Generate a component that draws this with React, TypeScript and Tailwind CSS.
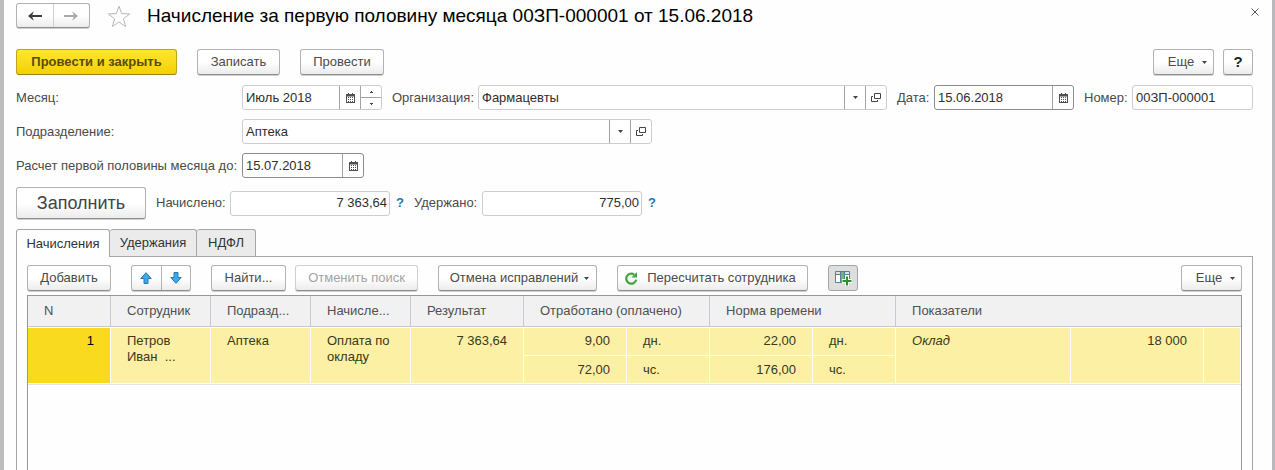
import { useId, useState, type ReactNode } from 'react'
import clsx from 'clsx'

const CALENDAR = 'calendar'
const LIST = 'list'
const OPEN = 'open'

type FieldAction = typeof CALENDAR | typeof LIST | typeof OPEN

const ACTION_LABELS: Record<FieldAction, string> = {
  calendar: 'Календарь',
  list: 'Выбрать из списка',
  open: 'Открыть',
}

function Caret() {
  return (
    <svg width="5" height="3" viewBox="0 0 5 3" className="shrink-0" aria-hidden="true">
      <path d="M0 0h5L2.5 3z" fill="#444" />
    </svg>
  )
}

function CalendarIcon() {
  return (
    <svg width="9" height="10" viewBox="0 0 9 10" aria-hidden="true">
      <path d="M2 0h1v1h3V0h1v1h2v9H0V1h2z" fill="#505050" />
      <path d="M1 3.5h7V9H1z" fill="#fff" />
      <path d="M2 4h1v1H2zM4 4h1v1H4zM6 4h1v1H6zM2 6h1v1H2zM4 6h1v1H4zM6 6h1v1H6zM2 8h1v1H2zM4 8h1v1H4zM6 8h1v1H6z" fill="#505050" />
    </svg>
  )
}

function OpenIcon() {
  return (
    <svg width="10" height="9" viewBox="0 0 10 9" fill="none" stroke="#444" aria-hidden="true">
      <path d="M3.5 0.5h6v5h-6z" />
      <path d="M2 3.5H0.5v5h6V7" />
    </svg>
  )
}

function ArrowIcon({ back, color }: { back?: boolean; color: string }) {
  return (
    <svg width="14" height="10" viewBox="0 0 14 10" fill={color} aria-hidden="true">
      {back ? <path d="M0 5l5.5-4.5v0.8L4.2 4H14v2H4.2l1.3 2.7v0.8z" /> : <path d="M14 5L8.5 0.5v0.8L9.8 4H0v2h9.8L8.5 8.7v0.8z" />}
    </svg>
  )
}

function BlueArrow({ down }: { down?: boolean }) {
  return (
    <svg width="12" height="12" viewBox="0 0 12 12" fill="#3fa9e8" stroke="#2479b5" strokeLinejoin="round" aria-hidden="true">
      {down ? <path d="M4 0.5h4v5h3.2L6 11.3 0.8 5.5H4z" /> : <path d="M6 0.7l5.2 5.8H8v5H4v-5H0.8z" />}
    </svg>
  )
}

function StarIcon() {
  return (
    <svg width="24" height="23" viewBox="0 0 24 23" fill="#fff" stroke="#b4b8bb" aria-hidden="true">
      <path d="M12 1.2l2.7 7.4 8 .3-6.3 4.9 2.2 7.7-6.6-4.5-6.6 4.5 2.2-7.7L1.3 8.9l8-.3z" />
    </svg>
  )
}

function RefreshIcon() {
  return (
    <svg width="13" height="13" viewBox="0 0 13 13" aria-hidden="true">
      <path d="M11.2 7.6A5 5 0 1 1 9.2 2.6" fill="none" stroke="#3da63f" strokeWidth="2.2" />
      <path d="M12 0v5.6H6.4z" fill="#3da63f" />
    </svg>
  )
}

function ColumnsIcon() {
  return (
    <svg width="17" height="15" viewBox="0 0 17 15" aria-hidden="true">
      <path d="M0.5 0.5h14v11H0.5z" fill="#fff" />
      <path d="M1 1h13v2H1z" fill="#d3e4f0" />
      <path d="M5 1h5v11H5z" fill="#6cb872" />
      <path d="M0.5 0.5h14v11H0.5zM5.5 1v11M9.5 1v11M1 3.5h4M10 3.5h4" stroke="#557f9e" fill="none" />
      <path d="M12 5v10M7 10h10" stroke="#fff" strokeWidth="4" />
      <path d="M12 5.5v9M7.5 10h9" stroke="#2c9422" strokeWidth="2" />
    </svg>
  )
}

const buttonFrame = 'rounded-[3px] border border-[#b2b2b2] border-b-[#8e8e8e] bg-linear-to-b from-white from-50% to-[#ececec] shadow-[0_1px_0_#d0d0d0]'

function Button({ children, className, disabled }: { children: ReactNode; className?: string; disabled?: boolean }) {
  return (
    <button
      type="button"
      disabled={disabled}
      className={clsx('flex h-[26px] shrink-0 items-center justify-center whitespace-nowrap', buttonFrame, disabled ? 'text-[#a3a3a3]' : 'text-[#4a4a4a]', className)}
    >
      {children}
    </button>
  )
}

function MoreButton() {
  return (
    <Button className="w-[61px] gap-2 pl-2">
      Еще <Caret />
    </Button>
  )
}

type FieldProps = {
  label: string
  value: string
  labelClass?: string
  boxClass?: string
  actions?: FieldAction[]
  strong?: boolean
  numeric?: boolean
  stepper?: boolean
}

function Field({ label, value, labelClass, boxClass, actions = [], strong, numeric, stepper }: FieldProps) {
  const id = useId()
  return (
    <>
      <label htmlFor={id} className={clsx('shrink-0 whitespace-nowrap', labelClass)}>{label}</label>
      <div className={clsx('flex h-[25px] rounded-[3px] border bg-white', strong ? 'border-[#8c8c8c]' : 'border-[#cdcdcd]', boxClass)}>
        <input
          id={id}
          defaultValue={value}
          className={clsx('min-w-0 flex-1 bg-transparent text-[#2e2e2e] outline-none', numeric ? 'px-[2px] text-right' : 'px-[3px]')}
        />
        {actions.map((action) => (
          <button key={action} type="button" aria-label={ACTION_LABELS[action]} className="flex w-[21px] shrink-0 items-center justify-center border-l border-[#a3a3a3]">
            {action === CALENDAR && <CalendarIcon />}
            {action === LIST && <Caret />}
            {action === OPEN && <OpenIcon />}
          </button>
        ))}
        {stepper && (
          <div className="flex w-[21px] shrink-0 flex-col border-l border-[#a3a3a3]">
            <button type="button" aria-label="Больше" className="flex flex-1 items-center justify-center border-b border-[#a3a3a3]">
              <svg width="3" height="2" viewBox="0 0 3 2" aria-hidden="true"><path d="M1 0h1v1h1v1H0V1h1z" fill="#444" /></svg>
            </button>
            <button type="button" aria-label="Меньше" className="flex flex-1 items-center justify-center">
              <svg width="3" height="2" viewBox="0 0 3 2" aria-hidden="true"><path d="M0 0h3v1H2v1H1V1H0z" fill="#444" /></svg>
            </button>
          </div>
        )}
      </div>
    </>
  )
}

const TABS = [
  { title: 'Начисления', width: 'w-[94px]' },
  { title: 'Удержания', width: 'w-[87px]' },
  { title: 'НДФЛ', width: 'w-[59px]' },
]

const HEADERS = [
  { title: 'N', span: 1 },
  { title: 'Сотрудник', span: 1 },
  { title: 'Подразд...', span: 1 },
  { title: 'Начисле...', span: 1 },
  { title: 'Результат', span: 1 },
  { title: 'Отработано (оплачено)', span: 2 },
  { title: 'Норма времени', span: 2 },
  { title: 'Показатели', span: 3 },
]

const cell = 'border-r border-b border-white px-4 pt-[5px] align-top'
const lowerCell = 'border-r border-b border-white px-4 pt-[6px] align-top'

function AccrualsTable() {
  return (
    <table className="w-full table-fixed border-separate border-spacing-0 text-left leading-4">
      <colgroup>
        <col className="w-[83px]" />
        <col className="w-[100px]" />
        <col className="w-[100px]" />
        <col className="w-[100px]" />
        <col className="w-[113px]" />
        <col className="w-[103px]" />
        <col className="w-[83px]" />
        <col className="w-[103px]" />
        <col className="w-[83px]" />
        <col className="w-[175px]" />
        <col className="w-[133px]" />
        <col />
      </colgroup>
      <thead>
        <tr className="h-[31px] bg-[#f1f1f1] text-[#505050]">
          {HEADERS.map((h) => (
            <th key={h.title} colSpan={h.span} className="border-r border-b border-[#c9c9d2] px-4 font-normal whitespace-nowrap last:border-r-0">{h.title}</th>
          ))}
        </tr>
      </thead>
      <tbody className="bg-[#fcf0a5] text-[#3b3820]">
        <tr className="h-[29px]">
          <td rowSpan={2} className={clsx(cell, 'border-t bg-[#fada1e] text-right text-black')}>1</td>
          <td rowSpan={2} className={clsx(cell, 'border-t')}>Петров<br />Иван &nbsp;...</td>
          <td rowSpan={2} className={clsx(cell, 'border-t')}>Аптека</td>
          <td rowSpan={2} className={clsx(cell, 'border-t')}>Оплата по окладу</td>
          <td rowSpan={2} className={clsx(cell, 'border-t text-right')}>7 363,64</td>
          <td className={clsx(cell, 'border-t text-right')}>9,00</td>
          <td className={clsx(cell, 'border-t')}>дн.</td>
          <td className={clsx(cell, 'border-t text-right')}>22,00</td>
          <td className={clsx(cell, 'border-t')}>дн.</td>
          <td rowSpan={2} className={clsx(cell, 'border-t italic')}>Оклад</td>
          <td rowSpan={2} className={clsx(cell, 'border-t text-right')}>18 000</td>
          <td rowSpan={2} className={clsx(cell, 'border-t')} />
        </tr>
        <tr className="h-[28px]">
          <td className={clsx(lowerCell, 'text-right')}>72,00</td>
          <td className={lowerCell}>чс.</td>
          <td className={clsx(lowerCell, 'text-right')}>176,00</td>
          <td className={lowerCell}>чс.</td>
        </tr>
      </tbody>
    </table>
  )
}

export default function App() {
  const [tab, setTab] = useState('Начисления')

  return (
    <main className="flex min-h-screen flex-col border-r-[3px] border-l-4 border-r-[#b9b9bd] border-l-[#bdbdbd] bg-[#fefefe] pt-[3px] font-['Liberation_Sans',Arial,sans-serif] text-[13px] leading-4 text-[#4a4a4a]">
      {/* Title bar */}
      <header className="flex items-start pr-2 pl-3">
        <div className={clsx('flex h-[25px] w-[74px] shrink-0', buttonFrame)}>
          <button type="button" aria-label="Назад" className="flex flex-1 items-center justify-center border-r border-[#d0d0d0]">
            <ArrowIcon back color="#3c3c3c" />
          </button>
          <button type="button" aria-label="Вперед" className="flex flex-1 items-center justify-center">
            <ArrowIcon color="#a9a9a9" />
          </button>
        </div>
        <button type="button" aria-label="Добавить в избранное" className="ml-[17px] pt-[2px]">
          <StarIcon />
        </button>
        <h1 className="ml-4 flex-1 text-[19px] leading-[26px] text-black">Начисление за первую половину месяца 00ЗП-000001 от 15.06.2018</h1>
        <button type="button" aria-label="Закрыть" className="p-[5px]">
          <svg width="8" height="8" viewBox="0 0 8 8" stroke="#555" aria-hidden="true"><path d="M0.5 0.5l7 7M7.5 0.5l-7 7" /></svg>
        </button>
      </header>

      <div className="mt-5 flex flex-1 flex-col pr-[19px] pl-3">
        <div className="flex">
          <button type="button" className="h-[26px] w-[161px] rounded-[3px] border border-[#c0a51c] border-b-[#9c8511] bg-linear-to-b from-[#ffe72a] to-[#f3d000] font-bold text-[#5a4b0c]">
            Провести и закрыть
          </button>
          <Button className="ml-5 w-[83px]">Записать</Button>
          <Button className="ml-5 w-[84px]">Провести</Button>
          <div className="ml-auto flex gap-[9px]">
            <MoreButton />
            <Button className="w-[30px] text-[15px] font-bold text-[#222]">?</Button>
          </div>
        </div>

        {/* Document fields */}
        <div className="mt-[10px] flex flex-col gap-[9px]">
          <div className="flex items-center">
            <Field label="Месяц:" value="Июль 2018" labelClass="w-[226px]" boxClass="w-[140px]" actions={[CALENDAR]} stepper />
            <Field label="Организация:" value="Фармацевты" labelClass="ml-[10px] w-[86px]" boxClass="flex-1" actions={[LIST, OPEN]} />
            <Field label="Дата:" value="15.06.2018" labelClass="ml-[10px] w-[37px]" boxClass="w-[140px]" actions={[CALENDAR]} strong />
            <Field label="Номер:" value="00ЗП-000001" labelClass="ml-[10px] w-[48px]" boxClass="w-[121px]" />
          </div>
          <div className="flex items-center">
            <Field label="Подразделение:" value="Аптека" labelClass="w-[226px]" boxClass="w-[410px]" actions={[LIST, OPEN]} />
          </div>
          <div className="flex items-center">
            <Field label="Расчет первой половины месяца до:" value="15.07.2018" labelClass="w-[226px]" boxClass="w-[122px]" actions={[CALENDAR]} strong />
          </div>
          <div className="flex items-center">
            <button type="button" className={clsx('h-[32px] w-[130px] text-[18px] text-[#444]', buttonFrame)}>Заполнить</button>
            <Field label="Начислено:" value="7 363,64" labelClass="ml-[10px] w-[74px]" boxClass="w-[160px]" numeric />
            <button type="button" className="w-5 text-[13px] font-bold text-[#1e78ad]">?</button>
            <Field label="Удержано:" value="775,00" labelClass="ml-1 w-[68px]" boxClass="w-[160px]" numeric />
            <button type="button" className="w-5 text-[13px] font-bold text-[#1e78ad]">?</button>
          </div>
        </div>

        {/* Tabs */}
        <div role="tablist" className="mt-[10px] flex">
          {TABS.map((t) => (
            <button
              key={t.title}
              type="button"
              role="tab"
              aria-selected={t.title === tab}
              onClick={() => setTab(t.title)}
              className={clsx('rounded-t-[3px] border border-b-0 border-[#a6a6a6] text-[#333] not-first:border-l-0', t.width, t.title === tab ? 'z-10 -mb-px h-[28px] bg-[#fefefe]' : 'h-[27px] bg-[#ebebeb]')}
            >
              {t.title}
            </button>
          ))}
        </div>

        <section className="flex flex-1 flex-col border border-b-0 border-[#a6a6a6] px-[10px] pt-2">
          <div className="flex">
            <Button className="w-[84px]">Добавить</Button>
            <div className={clsx('ml-5 flex h-[26px] w-[60px] shrink-0', buttonFrame)}>
              <button type="button" aria-label="Переместить вверх" className="flex flex-1 items-center justify-center border-r border-[#b2b2b2]"><BlueArrow /></button>
              <button type="button" aria-label="Переместить вниз" className="flex flex-1 items-center justify-center"><BlueArrow down /></button>
            </div>
            <Button className="ml-5 w-[75px]">Найти...</Button>
            <Button className="ml-[9px] w-[123px] border-[#cfcfcf]" disabled>Отменить поиск</Button>
            <Button className="ml-5 w-[159px] gap-[6px] pl-1">Отмена исправлений <Caret /></Button>
            <Button className="ml-5 w-[191px] gap-[9px] pr-1"><RefreshIcon /> Пересчитать сотрудника</Button>
            <button type="button" aria-label="Настроить колонки" className="ml-5 flex h-[26px] w-[30px] items-center justify-center rounded-[3px] border border-[#a3a3a3] bg-[#dedede]">
              <ColumnsIcon />
            </button>
            <div className="ml-auto"><MoreButton /></div>
          </div>
          <div className="mt-1 flex-1 border border-b-0 border-[#979797]">
            <AccrualsTable />
            <div className="border-t border-[#e6e6e0]" />
          </div>
        </section>
      </div>
    </main>
  )
}
